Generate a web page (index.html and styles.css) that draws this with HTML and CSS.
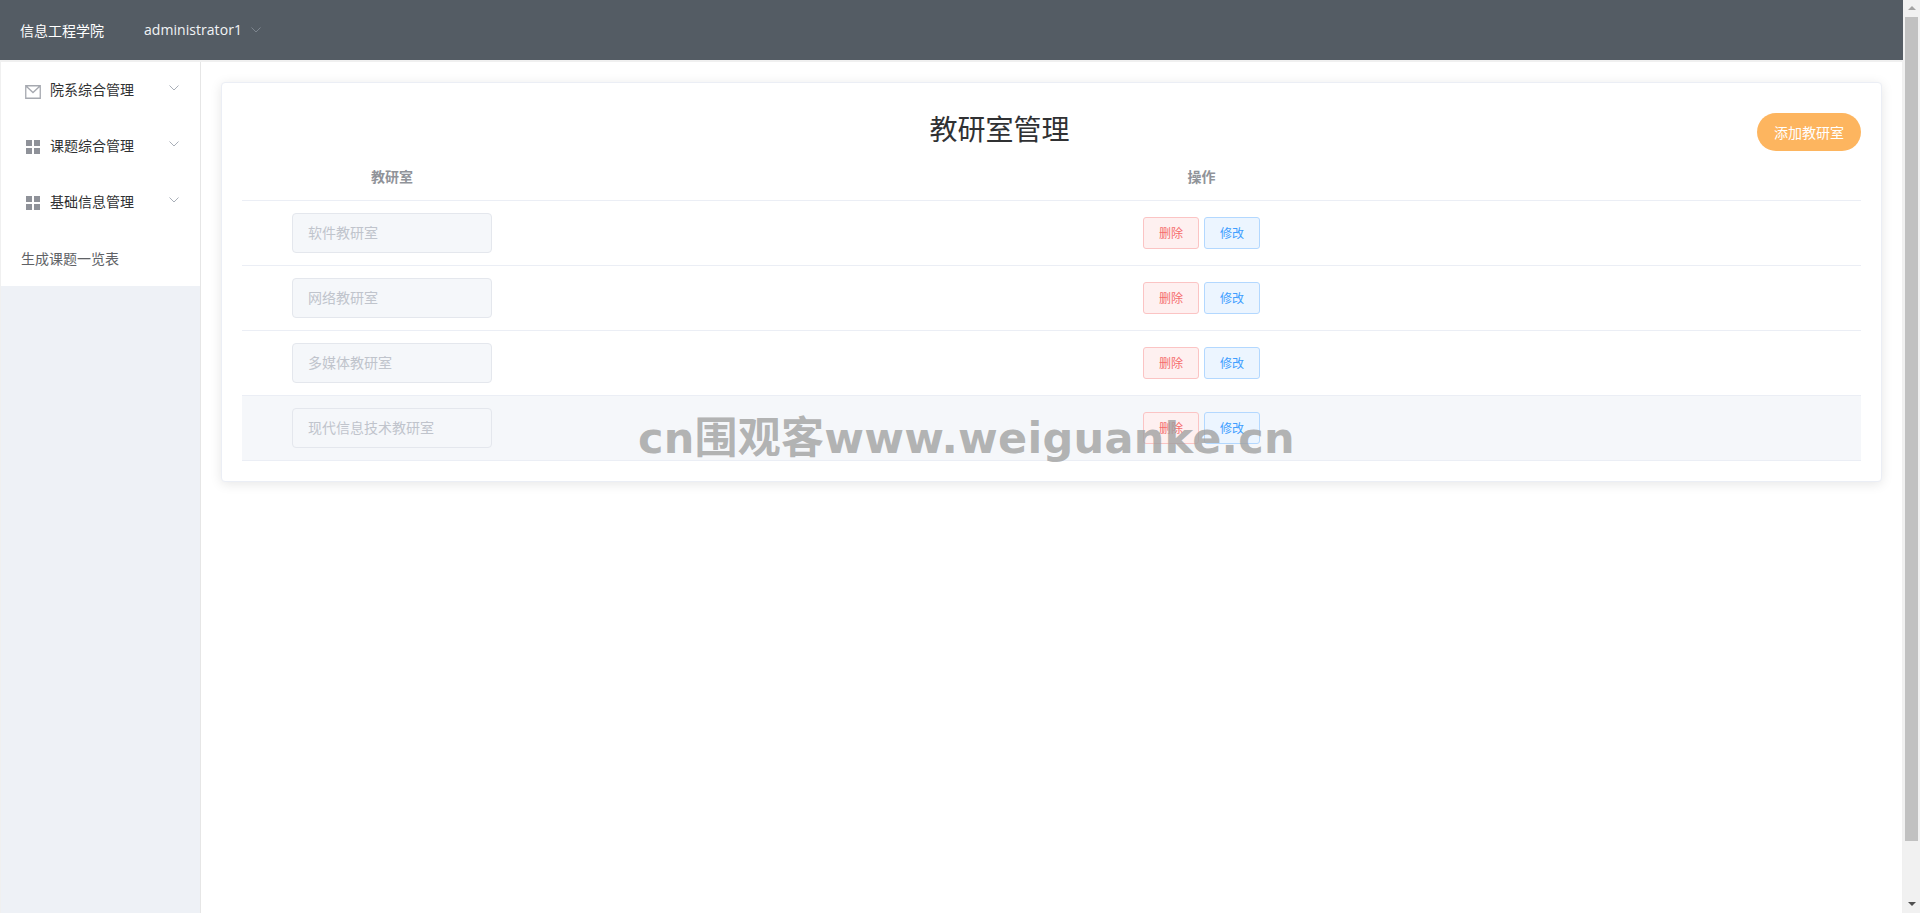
FILE: index.html
```html
<!DOCTYPE html>
<html lang="zh-CN">

<head>
    <meta charset="UTF-8">
    <title>教研室管理</title>
    <link rel="stylesheet" href="styles.css">
</head>

<body>
    <div class="page">
        <div class="app">
            <header class="topbar">
                <span class="school">信息工程学院</span>
                <span class="user">administrator1</span>
                <svg class="arrow arrow-top" viewBox="0 0 10 6"><path d="M0.5 0.5 L5 5 L9.5 0.5" /></svg>
            </header>

            <div class="layout">
                <aside class="sidebar">
                    <ul class="menu">
                        <li class="menu-item">
                            <svg class="icon icon-mail" viewBox="0 0 16 14"><path class="mail" d="M0.75 0.75 H15.25 V13.25 H0.75 Z M1 1 L8 7.5 L15 1" /></svg>
                            <span class="menu-text">院系综合管理</span>
                            <svg class="arrow" viewBox="0 0 10 6"><path d="M0.5 0.5 L5 5 L9.5 0.5" /></svg>
                        </li>
                        <li class="menu-item">
                            <svg class="icon" viewBox="0 0 16 14"><path class="grid" d="M1 0 H7 V6 H1 Z M9 0 H15 V6 H9 Z M1 8 H7 V14 H1 Z M9 8 H15 V14 H9 Z" /></svg>
                            <span class="menu-text">课题综合管理</span>
                            <svg class="arrow" viewBox="0 0 10 6"><path d="M0.5 0.5 L5 5 L9.5 0.5" /></svg>
                        </li>
                        <li class="menu-item">
                            <svg class="icon" viewBox="0 0 16 14"><path class="grid" d="M1 0 H7 V6 H1 Z M9 0 H15 V6 H9 Z M1 8 H7 V14 H1 Z M9 8 H15 V14 H9 Z" /></svg>
                            <span class="menu-text">基础信息管理</span>
                            <svg class="arrow" viewBox="0 0 10 6"><path d="M0.5 0.5 L5 5 L9.5 0.5" /></svg>
                        </li>
                        <li class="menu-link">生成课题一览表</li>
                    </ul>
                </aside>

                <main class="main">
                    <section class="card">
                        <div class="card-head">
                            <h1 class="title">教研室管理</h1>
                            <button class="btn-add">添加教研室</button>
                        </div>
                        <table class="table">
                            <thead>
                                <tr>
                                    <th class="col-name">教研室</th>
                                    <th>操作</th>
                                </tr>
                            </thead>
                            <tbody>
                                <tr>
                                    <td><input class="name-input" value="软件教研室" disabled></td>
                                    <td><button class="btn btn-del">删除</button><button class="btn btn-edit">修改</button></td>
                                </tr>
                                <tr>
                                    <td><input class="name-input" value="网络教研室" disabled></td>
                                    <td><button class="btn btn-del">删除</button><button class="btn btn-edit">修改</button></td>
                                </tr>
                                <tr>
                                    <td><input class="name-input" value="多媒体教研室" disabled></td>
                                    <td><button class="btn btn-del">删除</button><button class="btn btn-edit">修改</button></td>
                                </tr>
                                <tr class="current">
                                    <td><input class="name-input" value="现代信息技术教研室" disabled></td>
                                    <td><button class="btn btn-del">删除</button><button class="btn btn-edit">修改</button></td>
                                </tr>
                            </tbody>
                        </table>
                    </section>
                </main>
            </div>
        </div>

        <div class="scrollbar">
            <span class="scroll-up"></span>
            <div class="scroll-track"><div class="scroll-thumb"></div></div>
            <span class="scroll-down"></span>
        </div>
    </div>

    <div class="watermark">cn围观客www.weiguanke.cn</div>
</body>

</html>
```

FILE: styles.css
```css
* {
    margin: 0;
    padding: 0;
    box-sizing: border-box;
}

html,
body {
    height: 100%;
    overflow: hidden;
}

body {
    position: relative;
    background: #fff;
    font-family: "Noto Sans CJK SC", "Liberation Sans", sans-serif;
    font-size: 14px;
}

.page {
    display: flex;
    height: 913px;
}

.app {
    flex: 1;
    display: flex;
    flex-direction: column;
    min-width: 0;
    background: #f0f0f0;
}

/* top bar */
.topbar {
    height: 60px;
    display: flex;
    align-items: center;
    background: #545c64;
    color: #fff;
    padding-left: 20px;
}

.school {
    width: 124px;
    font-size: 14px;
}

.user {
    font-family: "Open Sans", sans-serif;
    font-size: 14px;
    letter-spacing: 0.05px;
    color: #f2f4f6;
    width: 107px;
    margin-top: -2px;
}

.arrow {
    width: 10px;
    height: 6px;
    fill: none;
    stroke: #a9afb8;
    stroke-width: 1;
}

.arrow-top {
    stroke: #7d858e;
}

.layout {
    flex: 1;
    display: flex;
    margin: 2px 1px 0 1px;
    min-height: 0;
}

/* left menu */
.sidebar {
    width: 200px;
    background: #eef1f6;
    border-right: 1px solid #e6e6e6;
}

.menu {
    list-style: none;
    background: #fff;
}

.menu-item {
    height: 56px;
    display: flex;
    align-items: center;
    padding-left: 24px;
    color: #303133;
}

.icon {
    width: 16px;
    height: 14px;
    margin-right: 9px;
    margin-top: 2px;
}

.icon-mail {
    margin-top: 3px;
}

.mail {
    fill: none;
    stroke: #a6a9b0;
    stroke-width: 1.3;
}

.grid {
    fill: #8f9299;
}

.menu-text {
    width: 119px;
    margin-top: -2px;
}

.menu-item .arrow {
    margin-top: -4px;
}

.menu-link {
    height: 56px;
    line-height: 56px;
    padding-left: 20px;
    color: #606266;
}

/* content */
.main {
    flex: 1;
    min-width: 0;
    background: #fff;
    padding: 20px;
}

.card {
    height: 400px;
    background: #fff;
    border: 1px solid #ebeef5;
    border-radius: 4px;
    box-shadow: 0 2px 12px 0 rgba(0, 0, 0, 0.1);
    padding: 20px;
}

.card-head {
    height: 49px;
    display: flex;
    align-items: flex-end;
}

.title {
    flex: 1;
    text-align: center;
    font-size: 28px;
    font-weight: normal;
    line-height: 48px;
    color: #303133;
}

.btn-add {
    width: 104px;
    height: 38px;
    margin-bottom: 1px;
    border: none;
    border-radius: 19px;
    background: #fdb55f;
    color: #fff;
    font-family: inherit;
    font-size: 14px;
}

.table {
    width: 100%;
    border-collapse: collapse;
    table-layout: fixed;
}

.table th {
    height: 48px;
    font-size: 14px;
    font-weight: bold;
    color: #909399;
    border-bottom: 1px solid #ebeef5;
    text-align: center;
}

.table th.col-name {
    width: 300px;
}

.table td {
    height: 65px;
    border-bottom: 1px solid #ebeef5;
    text-align: center;
    vertical-align: middle;
}

.table tr.current td {
    background: #f5f7fa;
}

.name-input {
    display: block;
    width: 200px;
    height: 40px;
    margin: 0 auto;
    padding: 0 15px 2px;
    border: 1px solid #e4e7ed;
    border-radius: 4px;
    background: #f5f7fa;
    color: #c0c4cc;
    font-family: inherit;
    font-size: 14px;
}

.btn {
    width: 56px;
    height: 32px;
    border: 1px solid;
    border-radius: 3px;
    font-family: inherit;
    font-size: 12px;
}

.btn-del {
    margin-right: 5px;
    background: #fef0f0;
    border-color: #fbc4c4;
    color: #f56c6c;
}

.btn-edit {
    background: #ecf5ff;
    border-color: #b3d8ff;
    color: #409eff;
}

/* browser scrollbar */
.scrollbar {
    width: 17px;
    display: flex;
    flex-direction: column;
    background: #f1f1f1;
}

.scroll-up,
.scroll-down {
    height: 17px;
    flex: none;
    position: relative;
}

.scroll-up::after,
.scroll-down::after {
    content: "";
    position: absolute;
    left: 5px;
    border-left: 4px solid transparent;
    border-right: 4px solid transparent;
}

.scroll-up::after {
    top: 6px;
    border-bottom: 4px solid #a3a3a3;
}

.scroll-down::after {
    top: 6px;
    border-top: 4px solid #505050;
}

.scroll-track {
    flex: 1;
    padding: 0 2px 0 2px;
}

.scroll-thumb {
    height: 824px;
    background: #c1c1c1;
}

/* watermark over the page */
.watermark {
    position: absolute;
    left: 638px;
    top: 407px;
    font-family: "DejaVu Sans", "Noto Sans CJK SC", sans-serif;
    font-size: 43px;
    font-weight: bold;
    letter-spacing: 0.25px;
    line-height: 62px;
    color: rgba(160, 160, 160, 0.8);
    white-space: nowrap;
}
```
